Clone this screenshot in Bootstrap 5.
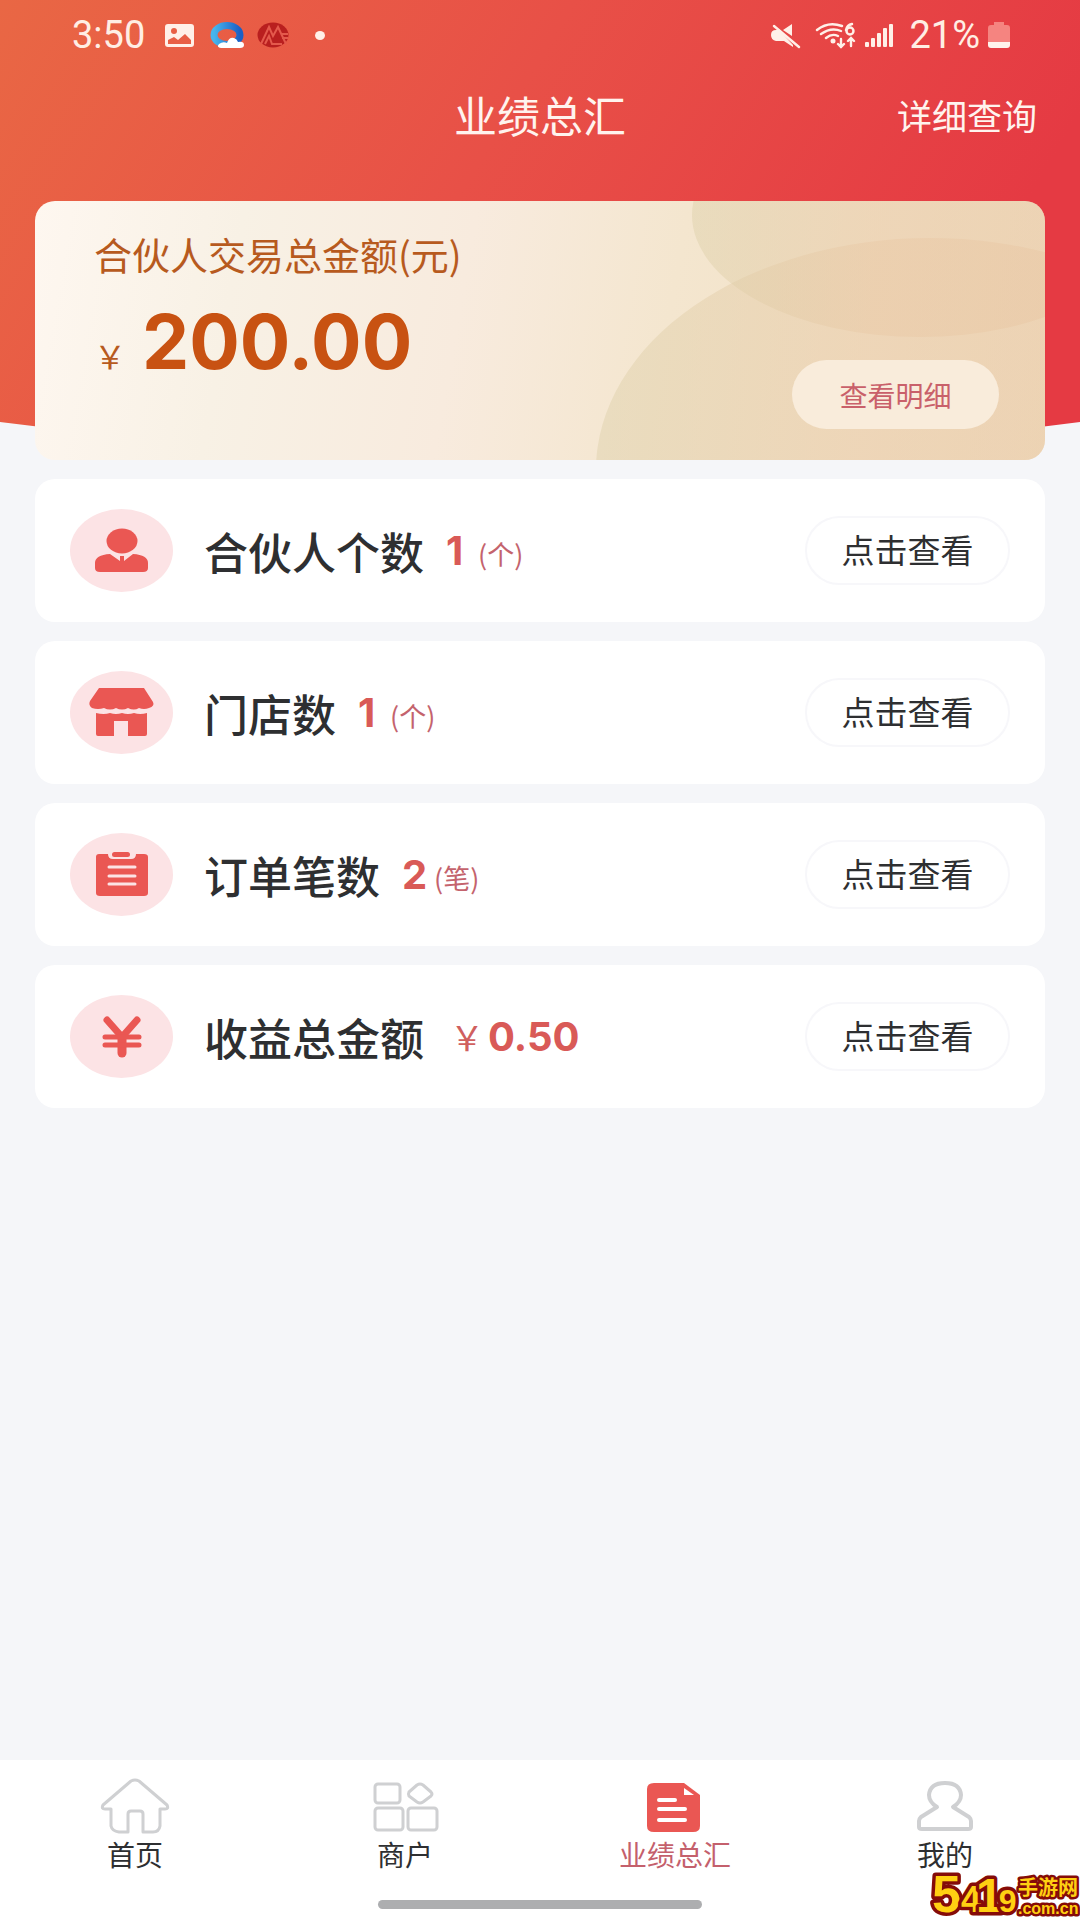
<!DOCTYPE html>
<html lang="zh-CN">
<head>
<meta charset="utf-8">
<meta name="viewport" content="width=device-width, initial-scale=1">
<title>业绩总汇</title>
<link rel="stylesheet" href="https://cdn.jsdelivr.net/npm/bootstrap@5.3.0/dist/css/bootstrap.min.css">
<style>
  body { background: #f5f6f9; color: #2e2f31; font-family: Roboto, "Noto Sans CJK SC", sans-serif; line-height: 1; }
  button { line-height: 1; }
  .cjk { font-family: "Noto Sans CJK SC", sans-serif; }
  .figures { font-family: Inter, "Noto Sans CJK SC", sans-serif; font-weight: 700; }
  .page-head { isolation: isolate; }
  .head-bg { z-index: -1; height: 460px; }
  .status-bar { height: 70px; padding: 0 70px 0 72px; color: #ffeee4; font-size: 38px; }
  .title-bar { height: 88px; margin-bottom: 43px; padding: 0 43px; color: #fff3ee; }
  .title-bar h1 { font-size: 43px; line-height: 1; }
  .title-bar a { font-size: 35px; color: #fff3ee; }
  .gutter { margin-left: 35px; margin-right: 35px; }
  .total-card { height: 259px; border-radius: 20px; padding: 34px 46px 31px 59px; color: #b75a1e; background: linear-gradient(100deg, #fef7f0 0%, #f8f1e5 20%, #f8ebde 42%, #f4e6cf 62%, #f0dcc0 100%); }
  .total-title { font-size: 38px; margin-bottom: 31px; }
  .total-sum { font-size: 75px; color: #c85212; }
  .total-yen { font-size: 32px; }
  .detail-btn { width: 207px; height: 69px; font-size: 28px; color: #c9606a; background: #f9ecdb; }
  .stat-list { gap: 19px; margin-top: 19px; }
  .stat-card { height: 143px; border-radius: 20px; padding: 0 35px; }
  .stat-icon { width: 103px; height: 83px; margin-right: 31px; }
  .stat-name { font-size: 44px; font-weight: 500; margin-right: 22px; }
  .stat-num { font-size: 40px; color: #d95a57; }
  .stat-num.one { min-width: 32px; }
  .stat-unit { font-size: 27px; color: #c4636d; }
  .stat-yen { font-size: 34px; color: #d0605f; }
  .view-btn { width: 205px; height: 69px; padding: 0 0 3px; font-size: 33px; color: #2e2f31; border: 2px solid #f7f7fa; background: #fff; }
  .tab-bar { height: 160px; padding-top: 17px; }
  .tab-bar a { font-size: 28px; gap: 5px; color: #2e2f31; }
  .tab-bar a.current { color: #c4606c; }
  .grip { width: 30%; height: 9px; bottom: 11px; background: #adaeb0; }
  .site-mark { right: 0; bottom: 0; width: 150px; height: 54px; }
  .site-mark text { font-family: "Liberation Sans", "Noto Sans CJK SC", sans-serif; font-weight: 700; fill: #ffd012; stroke: #850c08; stroke-linejoin: round; paint-order: stroke; }
</style>
<script src="https://cdn.jsdelivr.net/npm/bootstrap@5.3.0/dist/js/bootstrap.bundle.min.js"></script>
</head>
<body class="min-vh-100 d-flex flex-column position-relative">

<header class="page-head position-relative">
  <svg class="head-bg position-absolute top-0 start-0 w-100" viewBox="0 0 1080 460" preserveAspectRatio="none" aria-hidden="true">
    <defs><linearGradient id="headFill" x1="0" y1="0" x2="1" y2=".25"><stop offset="0" stop-color="#e96744"/><stop offset=".5" stop-color="#e85047"/><stop offset="1" stop-color="#e53a43"/></linearGradient></defs>
    <path d="M0 0H1080V422Q540 492 0 422Z" fill="url(#headFill)"/>
  </svg>

  <div class="status-bar d-flex align-items-center justify-content-between">
    <div class="d-flex align-items-center">
      <span>3:50</span>
      <svg class="ms-3" width="166" height="30" viewBox="-2 0 166 30" aria-hidden="true">
        <defs><linearGradient id="ring" x1="0" y1="0" x2="1" y2="0"><stop offset="0" stop-color="#47b5ee"/><stop offset="1" stop-color="#1b5fc4"/></linearGradient></defs>
        <path fill-rule="evenodd" fill="#fff0e8" d="M4 4H28Q31 4 31 7V24Q31 27 28 27H5Q2 27 2 24V7Q2 4 5 4ZM5 20V24H28V20L22 14L15 20L11 17ZM11 8A3 3 0 1 0 11 14A3 3 0 1 0 11 8Z"/>
        <ellipse cx="64" cy="15" rx="13" ry="9.500" fill="none" stroke="url(#ring)" stroke-width="7"/>
        <path d="M58 28Q53 27 56 24Q60 21 64 23Q66 17 71 18Q74 19 75 22Q81 21 81 25Q81 28 77 28Z" fill="#fff"/>
        <ellipse cx="110" cy="15" rx="15.500" ry="12.500" fill="#b91f1f"/>
        <path d="M98 24L106 7L110 16L115 7L123 24M102 24L106 16L109 24H119M119 18H125M119 14H125" fill="none" stroke="#e4594c" stroke-width="2"/>
        <ellipse cx="157" cy="15.500" rx="5" ry="4.500" fill="#fff0e8"/>
      </svg>
    </div>
    <div class="d-flex align-items-center">
      <svg class="me-3" width="122" height="30" viewBox="0 0 122 30" aria-hidden="true">
        <g fill="#fff0e8" stroke="none">
          <path d="M0 15Q0 10 5 10H8L22 25V27L13 21H5Q0 20 0 15ZM12 10L21 4V16Z"/>
          <rect x="94" y="22" width="4" height="5" rx="1"/><rect x="100" y="18" width="4" height="9" rx="1"/><rect x="106" y="13" width="4" height="14" rx="1"/><rect x="112" y="8" width="4" height="19" rx="1"/><rect x="118" y="4" width="4" height="23" rx="1"/>
          <circle cx="62" cy="21" r="2.500"/>
        </g>
        <g fill="none" stroke="#fff0e8" stroke-width="2.400" stroke-linecap="round">
          <path d="M3 6L28 27M46 10Q57 1 71 6M50 14Q60 7 70 11M55 18Q61 13 67 16M70 19V27M67 24L70 27L73 24M80 26V19M77 21L80 18L83 21M81 4Q76 5 75 10"/><circle cx="79" cy="11" r="3.500"/>
        </g>
      </svg>
      <span>21%</span>
      <svg class="ms-2" width="22" height="28" viewBox="0 0 22 28" aria-hidden="true"><path d="M6 1H16V4H19Q22 4 22 7V21H0V7Q0 4 3 4H6Z" fill="#f58480"/><path d="M0 21H22V24Q22 27 19 27H3Q0 27 0 24Z" fill="#fff3ec"/></svg>
    </div>
  </div>

  <div class="title-bar row g-0 align-items-center cjk">
    <h1 class="col-4 offset-4 text-center fw-normal mb-0 text-nowrap">业绩总汇</h1>
    <div class="col-4 text-end"><a href="#detail" class="text-decoration-none text-nowrap">详细查询</a></div>
  </div>

  <section class="total-card gutter position-relative overflow-hidden d-flex justify-content-between">
    <svg class="position-absolute top-0 start-0 w-100 h-100" viewBox="0 0 1010 259" preserveAspectRatio="none" aria-hidden="true">
      <defs><linearGradient id="disc" x1="0" y1="0" x2="1" y2="0"><stop offset="0" stop-color="#dccfa8" stop-opacity=".45"/><stop offset=".4" stop-color="#e9c8a5" stop-opacity=".45"/><stop offset="1" stop-color="#e6c29c" stop-opacity=".35"/></linearGradient></defs>
      <ellipse cx="895" cy="269" rx="334" ry="232" fill="url(#disc)"/>
      <ellipse cx="885" cy="14" rx="228" ry="122" fill="url(#disc)"/>
    </svg>
    <div class="position-relative">
      <div class="total-title cjk">合伙人交易总金额(元)</div>
      <div class="d-flex align-items-baseline"><span class="total-yen cjk me-3">￥</span><span class="total-sum figures">200.00</span></div>
    </div>
    <button type="button" class="detail-btn cjk position-relative align-self-end border-0 rounded-pill p-0">查看明细</button>
  </section>
</header>

<main class="stat-list gutter d-flex flex-column flex-grow-1">
  <section class="stat-card bg-white d-flex align-items-center">
    <svg class="stat-icon" viewBox="0 0 103 83" aria-hidden="true"><ellipse cx="51.500" cy="41.500" rx="51.500" ry="41.500" fill="#fce3e5"/><g fill="#ea5753"><ellipse cx="52" cy="32" rx="15.500" ry="12.500"/><path d="M40 45Q25 46 25 54V59Q25 63 30 63H73Q78 63 78 59V54Q78 46 63 45L54 52V47H50V52Z"/></g></svg>
    <div class="d-flex align-items-center flex-grow-1"><span class="stat-name cjk">合伙人个数</span><div class="d-flex align-items-baseline"><span class="stat-num one figures">1</span><span class="stat-unit cjk">(个)</span></div></div>
    <button type="button" class="view-btn cjk rounded-pill">点击查看</button>
  </section>
  <section class="stat-card bg-white d-flex align-items-center">
    <svg class="stat-icon" viewBox="0 0 103 83" aria-hidden="true"><ellipse cx="51.500" cy="41.500" rx="51.500" ry="41.500" fill="#fce3e5"/><path fill="#ea5753" d="M29 17H74L83 31Q85 35 79 37Q74 39 69 37Q64 40 58 37Q52 40 46 37Q40 40 34 37Q28 39 22 37Q18 34 20 30ZM26 42Q34 44 40 42Q46 44 52 42Q58 44 64 42Q70 44 77 42V63Q77 65 75 65H58V50H44V65H28Q26 65 26 63Z"/></svg>
    <div class="d-flex align-items-center flex-grow-1"><span class="stat-name cjk">门店数</span><div class="d-flex align-items-baseline"><span class="stat-num one figures">1</span><span class="stat-unit cjk">(个)</span></div></div>
    <button type="button" class="view-btn cjk rounded-pill">点击查看</button>
  </section>
  <section class="stat-card bg-white d-flex align-items-center">
    <svg class="stat-icon" viewBox="0 0 103 83" aria-hidden="true"><ellipse cx="51.500" cy="41.500" rx="51.500" ry="41.500" fill="#fce3e5"/><path fill="#ea5753" d="M29 21H38Q38 26 43 26H61Q66 26 66 21H74Q78 21 78 24V60Q78 63 74 63H30Q26 63 26 60V24Q26 21 29 21Z"/><rect x="42" y="19" width="18" height="5" rx="2.500" fill="#ea5753"/><path d="M39 34H65M39 43H65M39 51H65" stroke="#fce3e5" stroke-width="3" stroke-linecap="round"/></svg>
    <div class="d-flex align-items-center flex-grow-1"><span class="stat-name cjk">订单笔数</span><div class="d-flex align-items-baseline"><span class="stat-num one figures">2</span><span class="stat-unit cjk">(笔)</span></div></div>
    <button type="button" class="view-btn cjk rounded-pill">点击查看</button>
  </section>
  <section class="stat-card bg-white d-flex align-items-center">
    <svg class="stat-icon" viewBox="0 0 103 83" aria-hidden="true"><ellipse cx="51.500" cy="41.500" rx="51.500" ry="41.500" fill="#fce3e5"/><g fill="none" stroke="#ea5753" stroke-linecap="round"><path d="M37 25L52 42L67 25" stroke-width="7"/><path d="M52 42V58" stroke-width="9"/><path d="M35 42H69M35 50H69" stroke-width="5"/></g></svg>
    <div class="d-flex align-items-center flex-grow-1"><span class="stat-name cjk">收益总金额</span><div class="d-flex align-items-baseline"><span class="stat-yen cjk ms-1 me-1">￥</span><span class="stat-num figures">0.50</span></div></div>
    <button type="button" class="view-btn cjk rounded-pill">点击查看</button>
  </section>
</main>

<nav class="tab-bar bg-white position-relative">
  <div class="row g-0 cjk">
    <a href="#home" class="col d-flex flex-column align-items-center text-decoration-none">
      <svg width="70" height="58" viewBox="0 0 70 58" fill="none" stroke="#cfd0d2" stroke-width="3" stroke-linejoin="round" aria-hidden="true"><path d="M31 4Q35 2 39 4L67 28Q69 32 65 32H60V49Q59 55 53 55H43V37Q43 34 40 34H31Q28 34 28 37V55H19Q12 54 11 49V32H5Q1 32 3 28Z"/></svg>
      <span>首页</span>
    </a>
    <a href="#shops" class="col d-flex flex-column align-items-center text-decoration-none">
      <svg width="70" height="58" viewBox="0 0 70 58" fill="none" stroke="#cfd0d2" stroke-width="3" stroke-linejoin="round" aria-hidden="true"><rect x="5" y="7" width="25" height="19" rx="3"/><rect x="5" y="31" width="28" height="22" rx="3"/><rect x="38" y="31" width="29" height="22" rx="3"/><path d="M47 8Q50 6 53 8L61 15Q63 17 61 19L53 25Q50 27 47 25L39 19Q38 17 39 15Z"/></svg>
      <span>商户</span>
    </a>
    <a href="#results" class="current col d-flex flex-column align-items-center text-decoration-none" aria-current="page">
      <svg width="70" height="58" viewBox="0 0 70 58" aria-hidden="true"><path d="M14 6H44L60 18V49Q60 55 53 55H14Q7 55 7 49V12Q7 6 14 6Z" fill="#ea5753"/><path d="M44 11V18H54Z" fill="#fff"/><path d="M19 23H35M19 32H45M19 43H45" stroke="#fff" stroke-width="4" stroke-linecap="round"/></svg>
      <span>业绩总汇</span>
    </a>
    <a href="#mine" class="col d-flex flex-column align-items-center text-decoration-none">
      <svg width="70" height="58" viewBox="0 0 70 58" fill="none" stroke="#cfd0d2" stroke-width="4" stroke-linejoin="round" aria-hidden="true"><path d="M27 30Q19 25 19 18Q20 6 35 6Q50 6 51 18Q51 25 43 30L59 40Q61 42 61 44V50Q61 52 58 52H12Q9 52 9 50V44Q9 42 11 40Z"/></svg>
      <span>我的</span>
    </a>
  </div>
  <div class="grip position-absolute start-50 translate-middle-x rounded-pill"></div>
  <svg class="site-mark position-absolute" viewBox="0 0 150 54" aria-label="5419手游网">
    <text x="2" y="46" font-size="52" stroke-width="7">5<tspan font-size="36">4</tspan><tspan font-size="48" dx="-5">1</tspan><tspan font-size="32" dx="-4">9</tspan></text>
    <text x="88" y="29" font-size="20" stroke-width="5">手游网</text>
    <text x="88" y="48" font-size="16" stroke-width="5">.com.cn</text>
  </svg>
</nav>
</body>
</html>
